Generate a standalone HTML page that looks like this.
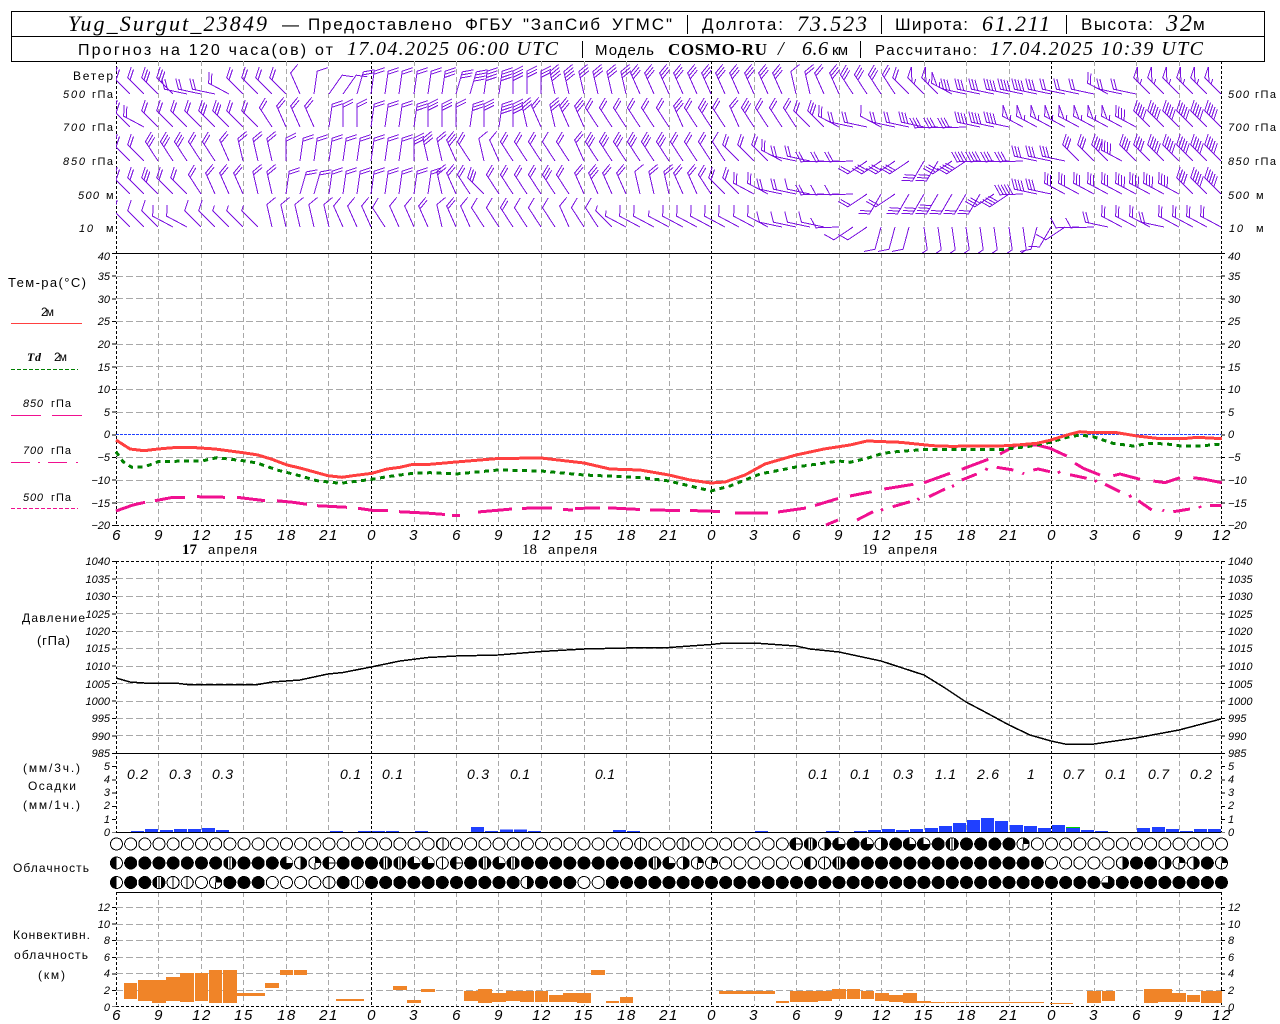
<!DOCTYPE html>
<html><head><meta charset="utf-8"><title>Yug_Surgut_23849</title>
<style>
html,body{margin:0;padding:0;background:#fff}
svg{display:block}
text{font-family:"Liberation Sans",sans-serif;fill:#000}
.i{font-style:italic;font-size:11px}
.u{font-size:11px}
.xl{font-style:italic;font-size:15px;text-anchor:middle}
.h{font-size:17px}
.s{font-family:"Liberation Serif",serif;font-style:italic;font-size:20px}
.l{font-size:13px}
.p{font-style:italic;font-size:14px}
.g{fill:none;stroke:#a8a8a8;stroke-dasharray:7 3}
.v{fill:none;stroke:#a8a8a8;stroke-dasharray:5 3}
.k{fill:none;stroke:#000;stroke-dasharray:3 2}
.cf{fill:none;stroke:#000;stroke-width:13;stroke-linecap:round;stroke-dasharray:0 14.1667}
.ce{fill:none;stroke:#fff;stroke-width:11;stroke-linecap:round;stroke-dasharray:0 14.1667}
.t{fill:none;stroke:#000;stroke-width:4}
</style></head><body>
<svg xmlns="http://www.w3.org/2000/svg" width="1280" height="1024" viewBox="0 0 1280 1024" shape-rendering="crispEdges">
<defs>
<clipPath id="wc"><path d="M116 62H1222V253H116z"/></clipPath>
<path id="f0" d="M0 0V-23l5-2.500"/>
<path id="f1" d="M0 0V-23l10-5"/>
<path id="f2" d="M0 0V-23l10-5M0-19.800l10-5"/>
<path id="f3" d="M0 0V-23l10-5M0-19.800l10-5M0-16.600l10-5"/>
<path id="f4" d="M0 0V-23l10-5M0-19.800l10-5M0-16.600l10-5M0-13.400l10-5"/>
<path id="f5" d="M0 0V-23l10-5M0-19.800l10-5M0-16.600l10-5M0-13.400l10-5M0-10.200l10-5"/>
<path id="fT" d="M0 0V-23L10-28 0-17M0-14l5-2.500"/>
<use id="a1" href="#f1" transform="rotate(-78)"/><use id="a2" href="#f2" transform="rotate(-78)"/><use id="a3" href="#f3" transform="rotate(-78)"/><use id="a4" href="#f4" transform="rotate(-78)"/>
<use id="b0" href="#f0" transform="rotate(-62)"/><use id="b1" href="#f1" transform="rotate(-62)"/><use id="b2" href="#f2" transform="rotate(-62)"/><use id="b3" href="#f3" transform="rotate(-62)"/><use id="b4" href="#f4" transform="rotate(-62)"/><use id="bT" href="#fT" transform="rotate(-62)"/>
<use id="c0" href="#f0" transform="rotate(-45)"/><use id="c1" href="#f1" transform="rotate(-45)"/><use id="c2" href="#f2" transform="rotate(-45)"/><use id="c3" href="#f3" transform="rotate(-45)"/><use id="c4" href="#f4" transform="rotate(-45)"/><use id="c5" href="#f5" transform="rotate(-45)"/><use id="cT" href="#fT" transform="rotate(-45)"/>
<use id="d1" href="#f1" transform="rotate(-33)"/><use id="d2" href="#f2" transform="rotate(-33)"/><use id="d3" href="#f3" transform="rotate(-33)"/>
<use id="e1" href="#f1" transform="rotate(-24)"/><use id="e2" href="#f2" transform="rotate(-24)"/><use id="e3" href="#f3" transform="rotate(-24)"/>
<use id="f-1" href="#f1" transform="rotate(-13)"/><use id="f-2" href="#f2" transform="rotate(-13)"/><use id="f-3" href="#f3" transform="rotate(-13)"/><use id="f-4" href="#f4" transform="rotate(-13)"/>
<use id="g2" href="#f2"/><use id="g3" href="#f3"/><use id="g4" href="#f4"/>
<use id="h1" href="#f1" transform="rotate(8)"/><use id="h2" href="#f2" transform="rotate(8)"/><use id="h3" href="#f3" transform="rotate(8)"/><use id="h4" href="#f4" transform="rotate(8)"/>
<use id="i2" href="#f2" transform="rotate(16)"/><use id="i3" href="#f3" transform="rotate(16)"/><use id="i4" href="#f4" transform="rotate(16)"/>
<use id="j1" href="#f1" transform="rotate(35)"/>
<use id="k1" href="#f1" transform="rotate(-92)"/><use id="k2" href="#f2" transform="rotate(-92)"/><use id="k3" href="#f3" transform="rotate(-92)"/><use id="k4" href="#f4" transform="rotate(-92)"/><use id="k5" href="#f5" transform="rotate(-92)"/>
<use id="m1" href="#f1" transform="rotate(195)"/>
<use id="n1" href="#f1" transform="rotate(210)"/><use id="n2" href="#f2" transform="rotate(210)"/><use id="n3" href="#f3" transform="rotate(210)"/><use id="n4" href="#f4" transform="rotate(210)"/>
<use id="o1" href="#f1" transform="rotate(236)"/><use id="o2" href="#f2" transform="rotate(236)"/><use id="o3" href="#f3" transform="rotate(236)"/><use id="o4" href="#f4" transform="rotate(236)"/>
<use id="r1" href="#f1" transform="rotate(172)"/>
<g id="sv"><circle r="6" fill="#fff" stroke="#000"/><path d="M0-6V6" stroke="#000"/></g>
<g id="sA"><circle r="6" fill="#fff" stroke="#000"/><path d="M0-6.500A6.500 6.500 0 0 0 0 6.500z"/></g>
<g id="sR"><circle r="6" fill="#fff" stroke="#000"/><path d="M0-6.500A6.500 6.500 0 0 1 0 6.500z"/></g>
<g id="sB"><circle r="6.500"/><path d="M-2-7H2V7H-2z" fill="#fff"/><path d="M0-6V6" stroke="#000"/><path d="M-2-6H2M-2 6H2" stroke="#000"/></g>
<g id="sQ"><circle r="6.500"/><path d="M0-6A6 6 0 0 1 6 0H0z" fill="#fff"/></g>
<g id="sW"><circle r="6.500"/><path d="M0-6A6 6 0 0 0-6 0H0z" fill="#fff"/></g>
<g id="sq"><circle r="6" fill="#fff" stroke="#000"/><path d="M0-6.500A6.500 6.500 0 0 1 6.500 0H0z"/><path d="M0 0V6" stroke="#000"/></g>
<g id="sH"><circle r="6" fill="#fff" stroke="#000"/><path d="M0-6.500A6.500 6.500 0 0 0 0 6.500z"/><path d="M0 0H6" stroke="#000"/></g>
</defs>

<!-- header -->
<path d="M11.500 11.500H1264.500V61.500H11.500zM11.500 36.500H1264.500" fill="none" stroke="#000"/>
<text class="s" style="font-size:22px" x="68" y="31" textLength="199">Yug_Surgut_23849</text>
<text class="h" x="282" y="30" textLength="15">—</text>
<text class="h" x="308" y="30" textLength="144">Предоставлено</text>
<text class="h" x="465" y="30" textLength="47">ФГБУ</text>
<text class="h" x="523" y="30" textLength="77">"ЗапСиб</text>
<text class="h" x="612" y="30" textLength="60">УГМС"</text>
<path d="M687.500 15V34M881.500 15V34M1066.500 15V34M582.500 41V58M860.500 41V58" stroke="#000"/>
<text class="h" x="702" y="30" textLength="81">Долгота:</text>
<text class="s" style="font-size:22px" x="797" y="31" textLength="70">73.523</text>
<text class="h" x="895" y="30" textLength="73">Широта:</text>
<text class="s" style="font-size:22px" x="982" y="31" textLength="68">61.211</text>
<text class="h" x="1081" y="30" textLength="72">Высота:</text>
<text class="s" style="font-size:24px" x="1166" y="31" textLength="26">32</text>
<text class="h" x="1193" y="30" textLength="10">м</text>
<text class="h" style="font-size:16px" x="78" y="55" textLength="255">Прогноз на 120 часа(ов) от</text>
<text class="s" x="347" y="55" textLength="211">17.04.2025 06:00 UTC</text>
<text class="h" style="font-size:15px" x="595" y="55" textLength="59">Модель</text>
<text x="668" y="55" textLength="99" style="font-family:'Liberation Serif',serif;font-weight:bold;font-size:17px">COSMO-RU</text>
<text class="s" x="778" y="55" textLength="11">/</text>
<text class="s" x="802" y="55" textLength="26">6.6</text>
<text class="h" style="font-size:15px" x="832" y="55" textLength="16">км</text>
<text class="h" style="font-size:15px" x="875" y="55" textLength="102">Рассчитано:</text>
<text class="s" x="990" y="55" textLength="213">17.04.2025 10:39 UTC</text>

<!-- vertical grid -->
<g id="vg" stroke-width="1">
<path class="v" d="M158.500 61V253M201.500 61V253M243.500 61V253M286.500 61V253M328.500 61V253M414.500 61V253M456.500 61V253M498.500 61V253M541.500 61V253M584.500 61V253M626.500 61V253M669.500 61V253M754.500 61V253M796.500 61V253M839.500 61V253M881.500 61V253M924.500 61V253M966.500 61V253M1009.500 61V253M1094.500 61V253M1136.500 61V253M1179.500 61V253"/>
<path class="v" d="M158.500 253V525M201.500 253V525M243.500 253V525M286.500 253V525M328.500 253V525M414.500 253V525M456.500 253V525M498.500 253V525M541.500 253V525M584.500 253V525M626.500 253V525M669.500 253V525M754.500 253V525M796.500 253V525M839.500 253V525M881.500 253V525M924.500 253V525M966.500 253V525M1009.500 253V525M1094.500 253V525M1136.500 253V525M1179.500 253V525"/>
<path class="v" d="M158.500 561V832M201.500 561V832M243.500 561V832M286.500 561V832M328.500 561V832M414.500 561V832M456.500 561V832M498.500 561V832M541.500 561V832M584.500 561V832M626.500 561V832M669.500 561V832M754.500 561V832M796.500 561V832M839.500 561V832M881.500 561V832M924.500 561V832M966.500 561V832M1009.500 561V832M1094.500 561V832M1136.500 561V832M1179.500 561V832"/>
<path class="v" d="M158.500 892V1006M201.500 892V1006M243.500 892V1006M286.500 892V1006M328.500 892V1006M414.500 892V1006M456.500 892V1006M498.500 892V1006M541.500 892V1006M584.500 892V1006M626.500 892V1006M669.500 892V1006M754.500 892V1006M796.500 892V1006M839.500 892V1006M881.500 892V1006M924.500 892V1006M966.500 892V1006M1009.500 892V1006M1094.500 892V1006M1136.500 892V1006M1179.500 892V1006"/>
<path class="k" d="M116.500 61V525M371.500 61V525M711.500 61V525M1051.500 61V525M1221.500 61V525M116.500 561V832M371.500 561V832M711.500 561V832M1051.500 561V832M1221.500 561V832M116.500 892V1006M371.500 892V1006M711.500 892V1006M1051.500 892V1006M1221.500 892V1006"/>
</g>

<!-- horizontal grid -->
<path class="g" d="M116 276.500H1221M116 298.500H1221M116 321.500H1221M116 344.500H1221M116 366.500H1221M116 389.500H1221M116 412.500H1221M116 457.500H1221M116 480.500H1221M116 502.500H1221"/>
<path class="g" d="M116 578.500H1221M116 596.500H1221M116 613.500H1221M116 631.500H1221M116 648.500H1221M116 666.500H1221M116 683.500H1221M116 701.500H1221M116 718.500H1221M116 735.500H1221"/>
<path class="g" d="M116 907.500H1221M116 924.500H1221M116 940.500H1221M116 957.500H1221M116 973.500H1221M116 990.500H1221"/>
<path d="M116 253.500H1221M116 753.500H1221M116 832.500H1221M116 892.500H1221" fill="none" stroke="#000"/>
<path class="k" d="M116 525.500H1221M116 561.500H1221M116 1006.500H1221"/>
<path d="M116 434.500H1221" fill="none" stroke="#2040ff" stroke-dasharray="3 1"/>
<!-- ticks -->
<path class="t" stroke-dasharray="1 21.667" d="M114 253V526M1223 253V526"/>
<path class="t" stroke-dasharray="1 16.45" d="M114 561V754M1223 561V754"/>
<path class="t" stroke-dasharray="1 12.27" d="M114 766V833M1223 766V833"/>
<path class="t" stroke-dasharray="1 15.6" d="M114 907V1007M1223 907V1007"/>

<!-- wind barbs -->
<g fill="none" stroke="#7a10e0" clip-path="url(#wc)">
<g transform="translate(0 94)"><use href="#c2" x="130"/><use href="#c2" x="144"/><use href="#c3" x="158"/><use href="#c3" x="173"/><use href="#a2" x="187"/><use href="#a2" x="201"/><use href="#a2" x="215"/><use href="#b2" x="229"/><use href="#c2" x="243"/><use href="#c2" x="258"/><use href="#c2" x="272"/><use href="#c2" x="286"/><use href="#e1" x="300"/><use href="#h1" x="314"/><use href="#j1" x="329"/><use href="#j1" x="343"/><use href="#i2" x="357"/><use href="#h2" x="371"/><use href="#h2" x="385"/><use href="#h2" x="399"/><use href="#h2" x="414"/><use href="#h2" x="428"/><use href="#h3" x="442"/><use href="#i3" x="456"/><use href="#i4" x="470"/><use href="#h4" x="484"/><use href="#h4" x="499"/><use href="#g4" x="513"/><use href="#g3" x="527"/><use href="#g3" x="541"/><use href="#f-4" x="555"/><use href="#f-4" x="569"/><use href="#f-3" x="584"/><use href="#f-3" x="598"/><use href="#f-3" x="612"/><use href="#f-3" x="626"/><use href="#e3" x="640"/><use href="#e3" x="654"/><use href="#e3" x="669"/><use href="#e3" x="683"/><use href="#e3" x="697"/><use href="#e3" x="711"/><use href="#e3" x="725"/><use href="#e3" x="739"/><use href="#e3" x="754"/><use href="#e3" x="768"/><use href="#e3" x="782"/><use href="#f-1" x="796"/><use href="#f-2" x="810"/><use href="#e2" x="824"/><use href="#e3" x="839"/><use href="#d3" x="853"/><use href="#d3" x="867"/><use href="#d3" x="881"/><use href="#d2" x="895"/><use href="#c2" x="909"/><use href="#cT" x="924"/><use href="#cT" x="938"/><use href="#bT" x="952"/><use href="#a3" x="966"/><use href="#a3" x="980"/><use href="#a3" x="994"/><use href="#a4" x="1009"/><use href="#a4" x="1023"/><use href="#a4" x="1037"/><use href="#a3" x="1051"/><use href="#a2" x="1065"/><use href="#a2" x="1079"/><use href="#a2" x="1094"/><use href="#b2" x="1108"/><use href="#a2" x="1122"/><use href="#a2" x="1136"/><use href="#cT" x="1150"/><use href="#cT" x="1164"/><use href="#cT" x="1179"/><use href="#cT" x="1193"/><use href="#cT" x="1207"/><use href="#cT" x="1221"/></g>
<g transform="translate(0 127)"><use href="#c2" x="130"/><use href="#b2" x="144"/><use href="#c2" x="158"/><use href="#c2" x="173"/><use href="#c2" x="187"/><use href="#c2" x="201"/><use href="#c3" x="215"/><use href="#c3" x="229"/><use href="#c2" x="243"/><use href="#c2" x="258"/><use href="#d2" x="272"/><use href="#e2" x="286"/><use href="#e2" x="300"/><use href="#e2" x="314"/><use href="#h2" x="329"/><use href="#g2" x="343"/><use href="#g2" x="357"/><use href="#h2" x="371"/><use href="#h2" x="385"/><use href="#h2" x="399"/><use href="#h3" x="414"/><use href="#g3" x="428"/><use href="#g3" x="442"/><use href="#g2" x="456"/><use href="#h3" x="470"/><use href="#g3" x="484"/><use href="#h4" x="499"/><use href="#g4" x="513"/><use href="#f-3" x="527"/><use href="#e2" x="541"/><use href="#f-3" x="555"/><use href="#e3" x="569"/><use href="#e3" x="584"/><use href="#d2" x="598"/><use href="#d2" x="612"/><use href="#d2" x="626"/><use href="#d2" x="640"/><use href="#d2" x="654"/><use href="#d2" x="669"/><use href="#e3" x="683"/><use href="#d2" x="697"/><use href="#d3" x="711"/><use href="#d2" x="725"/><use href="#e2" x="739"/><use href="#d3" x="754"/><use href="#d2" x="768"/><use href="#d2" x="782"/><use href="#d2" x="796"/><use href="#c2" x="810"/><use href="#c3" x="824"/><use href="#b2" x="839"/><use href="#a2" x="853"/><use href="#a2" x="867"/><use href="#b1" x="881"/><use href="#a2" x="895"/><use href="#a2" x="909"/><use href="#a3" x="924"/><use href="#k3" x="938"/><use href="#k3" x="952"/><use href="#k3" x="966"/><use href="#a4" x="980"/><use href="#a4" x="994"/><use href="#a4" x="1009"/><use href="#bT" x="1023"/><use href="#bT" x="1037"/><use href="#bT" x="1051"/><use href="#bT" x="1065"/><use href="#bT" x="1079"/><use href="#bT" x="1094"/><use href="#bT" x="1108"/><use href="#bT" x="1122"/><use href="#b4" x="1136"/><use href="#c5" x="1150"/><use href="#c5" x="1164"/><use href="#c5" x="1179"/><use href="#c5" x="1193"/><use href="#c5" x="1207"/><use href="#c5" x="1221"/></g>
<g transform="translate(0 161)"><use href="#c2" x="130"/><use href="#c2" x="144"/><use href="#d3" x="158"/><use href="#d3" x="173"/><use href="#d3" x="187"/><use href="#d2" x="201"/><use href="#d2" x="215"/><use href="#e2" x="229"/><use href="#f-2" x="243"/><use href="#f-2" x="258"/><use href="#f-2" x="272"/><use href="#g2" x="286"/><use href="#h2" x="300"/><use href="#h2" x="314"/><use href="#h2" x="329"/><use href="#h2" x="343"/><use href="#h2" x="357"/><use href="#h2" x="371"/><use href="#h2" x="385"/><use href="#h2" x="399"/><use href="#g3" x="414"/><use href="#f-3" x="428"/><use href="#f-2" x="442"/><use href="#e3" x="456"/><use href="#d2" x="470"/><use href="#f-1" x="484"/><use href="#e1" x="499"/><use href="#d2" x="513"/><use href="#d2" x="527"/><use href="#d2" x="541"/><use href="#d1" x="555"/><use href="#d2" x="569"/><use href="#e2" x="584"/><use href="#d3" x="598"/><use href="#d3" x="612"/><use href="#d3" x="626"/><use href="#d3" x="640"/><use href="#d3" x="654"/><use href="#d3" x="669"/><use href="#d2" x="683"/><use href="#d2" x="697"/><use href="#d2" x="711"/><use href="#d1" x="725"/><use href="#c2" x="739"/><use href="#c2" x="754"/><use href="#c2" x="768"/><use href="#b2" x="782"/><use href="#a2" x="796"/><use href="#a2" x="810"/><use href="#k2" x="824"/><use href="#k2" x="839"/><use href="#k2" x="853"/><use href="#o2" x="867"/><use href="#o3" x="881"/><use href="#o3" x="895"/><use href="#o3" x="909"/><use href="#n3" x="924"/><use href="#n3" x="938"/><use href="#o3" x="952"/><use href="#o4" x="966"/><use href="#k4" x="980"/><use href="#k4" x="994"/><use href="#k3" x="1009"/><use href="#k3" x="1023"/><use href="#a3" x="1037"/><use href="#a3" x="1051"/><use href="#a3" x="1065"/><use href="#c3" x="1079"/><use href="#c3" x="1094"/><use href="#c4" x="1108"/><use href="#b4" x="1122"/><use href="#c4" x="1136"/><use href="#c4" x="1150"/><use href="#c5" x="1164"/><use href="#c5" x="1179"/><use href="#c5" x="1193"/><use href="#c5" x="1207"/><use href="#c5" x="1221"/></g>
<g transform="translate(0 194)"><use href="#c2" x="130"/><use href="#c2" x="144"/><use href="#c3" x="158"/><use href="#c2" x="173"/><use href="#c2" x="187"/><use href="#d2" x="201"/><use href="#e2" x="215"/><use href="#e2" x="229"/><use href="#e2" x="243"/><use href="#f-2" x="258"/><use href="#f-2" x="272"/><use href="#h2" x="286"/><use href="#i2" x="300"/><use href="#i2" x="314"/><use href="#h2" x="329"/><use href="#h2" x="343"/><use href="#h2" x="357"/><use href="#h2" x="371"/><use href="#h2" x="385"/><use href="#h2" x="399"/><use href="#h2" x="414"/><use href="#h2" x="428"/><use href="#f-2" x="442"/><use href="#e2" x="456"/><use href="#d2" x="470"/><use href="#c3" x="484"/><use href="#d2" x="499"/><use href="#d2" x="513"/><use href="#d2" x="527"/><use href="#d2" x="541"/><use href="#d3" x="555"/><use href="#d2" x="569"/><use href="#e2" x="584"/><use href="#e3" x="598"/><use href="#e2" x="612"/><use href="#e2" x="626"/><use href="#f-1" x="640"/><use href="#f-2" x="654"/><use href="#f-2" x="669"/><use href="#e2" x="683"/><use href="#e2" x="697"/><use href="#d2" x="711"/><use href="#c2" x="725"/><use href="#c2" x="739"/><use href="#b2" x="754"/><use href="#b2" x="768"/><use href="#a2" x="782"/><use href="#a2" x="796"/><use href="#a1" x="810"/><use href="#k2" x="824"/><use href="#k1" x="839"/><use href="#k1" x="853"/><use href="#o2" x="867"/><use href="#n2" x="881"/><use href="#o2" x="895"/><use href="#n3" x="909"/><use href="#n3" x="924"/><use href="#n4" x="938"/><use href="#n2" x="952"/><use href="#n2" x="966"/><use href="#n2" x="980"/><use href="#o3" x="994"/><use href="#o4" x="1009"/><use href="#k5" x="1023"/><use href="#a4" x="1037"/><use href="#a3" x="1051"/><use href="#b3" x="1065"/><use href="#b3" x="1079"/><use href="#b3" x="1094"/><use href="#b3" x="1108"/><use href="#b3" x="1122"/><use href="#b4" x="1136"/><use href="#b4" x="1150"/><use href="#b4" x="1164"/><use href="#b4" x="1179"/><use href="#c4" x="1193"/><use href="#c5" x="1207"/><use href="#c5" x="1221"/></g>
<g transform="translate(0 227)"><use href="#c1" x="130"/><use href="#c1" x="144"/><use href="#c1" x="158"/><use href="#b1" x="173"/><use href="#b1" x="187"/><use href="#c1" x="201"/><use href="#c1" x="215"/><use href="#c0" x="229"/><use href="#c0" x="243"/><use href="#c0" x="258"/><use href="#f-1" x="272"/><use href="#f-1" x="286"/><use href="#f-1" x="300"/><use href="#f-1" x="314"/><use href="#f-1" x="329"/><use href="#e1" x="343"/><use href="#e1" x="357"/><use href="#e1" x="371"/><use href="#d1" x="385"/><use href="#e1" x="399"/><use href="#e1" x="414"/><use href="#e2" x="428"/><use href="#f-1" x="442"/><use href="#e2" x="456"/><use href="#e1" x="470"/><use href="#d1" x="484"/><use href="#d1" x="499"/><use href="#d2" x="513"/><use href="#d1" x="527"/><use href="#d1" x="541"/><use href="#d1" x="555"/><use href="#e1" x="569"/><use href="#d1" x="584"/><use href="#d1" x="598"/><use href="#c0" x="612"/><use href="#b0" x="626"/><use href="#b1" x="640"/><use href="#b1" x="654"/><use href="#b0" x="669"/><use href="#b1" x="683"/><use href="#b1" x="697"/><use href="#b1" x="711"/><use href="#b1" x="725"/><use href="#b1" x="739"/><use href="#b1" x="754"/><use href="#b1" x="768"/><use href="#a1" x="782"/><use href="#a1" x="796"/><use href="#a1" x="810"/><use href="#a1" x="824"/><use href="#k1" x="839"/><use href="#o1" x="853"/><use href="#o1" x="867"/><use href="#m1" x="881"/><use href="#m1" x="895"/><use href="#m1" x="909"/><use href="#r1" x="924"/><use href="#r1" x="938"/><use href="#r1" x="952"/><use href="#r1" x="966"/><use href="#r1" x="980"/><use href="#r1" x="994"/><use href="#r1" x="1009"/><use href="#r1" x="1023"/><use href="#m1" x="1037"/><use href="#n1" x="1051"/><use href="#o1" x="1065"/><use href="#k1" x="1079"/><use href="#k1" x="1094"/><use href="#a2" x="1108"/><use href="#b2" x="1122"/><use href="#b2" x="1136"/><use href="#b2" x="1150"/><use href="#a2" x="1164"/><use href="#b2" x="1179"/><use href="#b2" x="1193"/><use href="#b2" x="1207"/><use href="#b2" x="1221"/></g>
</g>

<!-- temperature curves -->
<g fill="none" stroke-linejoin="round">
<path stroke="#f01090" stroke-width="3" d="M116 511L133 505 145 502.300M155 500.700L173 497.300 185 497.300M197 496.700L225 497.300M237 497.300L265 500.700M277 500.700L293 502.300 307 504.300M317 505.700L347 507.300M358 508.300L372 510.300 388 510.300M399 511.700L430 513.300 445 514.500M452 515.500L460 515.500M478 512L512 509M522 508.300L552 508M563 509.500L573 510M575 508.500L600 507.800M608 507.800L640 509.500M650 510L680 510.500M690 510.500L720 511.500M735 513L768 513M778 512L806 508M815 505.500L838 498.500M850 496L871.700 491.700M884.300 489L913.300 484.300M924 482.700L950 473.300M961.700 469.300L988.300 459.300M1000 454L1016.700 445 1036.700 445 1050 448.300 1066.700 456M1075 463.300L1083.300 468.300 1100 475M1113.300 475.700L1120 474 1140 479.300M1153.300 481L1165 482.700 1180 477.700M1193.300 477.700L1203.300 479 1221.700 482.700"/>
<path stroke="#f01090" stroke-width="3" d="M826 525L838 520M857 520L873 511.700M881 510.500L883 509M892.700 506.700L910 501.700M917.500 500L919 498.500M929 496.700L945 489M952 486.500L954 485.500M961.700 480L976.700 474M986 470.500L987 468M996.700 467.300L1013.300 470M1022.500 473L1024 474M1033.300 470L1038.300 469 1050 471.700M1058.500 471L1059.500 473.500M1070 474.700L1086.700 478.300M1095 480L1096.500 482M1105 484.300L1120 491.700M1129.500 495L1131 497.500M1138.300 500.700L1151.700 510M1162.500 510L1164 511M1173.300 511.700L1190 509M1199.500 506L1200.500 508M1210 505.300L1221.700 505.300"/>
<path stroke="#008000" stroke-width="3" stroke-dasharray="5 4.500" d="M116 451.700L123 461.700 131.700 467.300 145 466.700 158 461.700 187 461 203 460.700 217 457.700 243 460.700 257 463 277 470 297 475 317 480.700 340 483.300 353 481.700 372 479.300 387 476.700 413 473.300 430 472.700 456 474 498 470 541 471 584 475 640 477.500 669 481 711 491 730 486 760 474 796 467 839 461 850 462.300 867 458.300 883 453.300 900 451.300 923 449.700 1000 449.700 1027 446.700 1050 442.300 1067 437.300 1080 435 1093 436.700 1113 443.300 1133 446 1150 443.300 1167 444 1183 446.300 1203 445.700 1222 444"/>
<path stroke="#ff4040" stroke-width="3" d="M116 440L130 449 144 450.700 158 449 173 447.700 193 447.500 215 449 243 452.700 258 455 272 459.300 287 465 300 468 317 472.700 328 475.700 342 477.300 353 475.700 372 473.300 387 469 400 467.300 413 464.300 430 464.300 456 462 498 458.500 541 458 584 463 610 469 640 470 669 475 690 480 711 483 725 482 745 475 765 464 796 455 824 449 850 445 867 441 900 442.300 933 445.700 950 446.300 1000 446 1017 445 1037 443.300 1050 440.300 1067 435 1080 431.700 1093 432.700 1117 432.700 1137 436 1160 438.700 1183 438.700 1197 437.300 1222 438.700"/>
<path stroke="#000" stroke-width="1.500" d="M116 678L130 682 144 683 175 683 187 684.500 258 684.500 272 682 300 680 328 674 343 672.500 371 667 400 661 428 657.500 456 656 498 655 541 651.500 584 649 626 648 669 647.500 711 644.500 725 643 754 643 796 646 810 649 839 652 881 661 924 675 945 688 966 702 985 712 1009 725 1030 735 1051 741 1065 744 1094 744 1136 738 1179 730 1221 719"/>
</g>

<!-- precipitation bars -->
<path fill="#2040ff" d="M131 832v-1h13v1zM145 832v-3h13v3zM160 832v-2h13v2zM174 832v-3h13v3zM188 832v-3h13v3zM202 832v-4h13v4zM216 832v-2h13v2zM330 832v-1h13v1zM358 832v-1h13v1zM372 832v-1h13v1zM386 832v-1h13v1zM415 832v-1h13v1zM471 832v-5h13v5zM485 832v-1h13v1zM500 832v-2.500h13v2.500zM514 832v-2.500h13v2.500zM528 832v-1h13v1zM613 832v-2h13v2zM627 832v-1h13v1zM755 832v-1h13v1zM826 832v-1h13v1zM854 832v-1h13v1zM868 832v-2h13v2zM882 832v-3h13v3zM896 832v-2h13v2zM910 832v-3h13v3zM925 832v-4h13v4zM939 832v-6h13v6zM953 832v-9h13v9zM967 832v-12h13v12zM981 832v-14h13v14zM995 832v-11h13v11zM1010 832v-7h13v7zM1024 832v-6h13v6zM1038 832v-4h13v4zM1052 832v-7h13v7zM1066 832v-4h14v4zM1081 832v-2h13v2zM1095 832v-1h13v1zM1137 832v-4h13v4zM1152 832v-5h13v5zM1166 832v-3h13v3zM1180 832v-1h13v1zM1194 832v-3h13v3zM1208 832v-3h13v3z"/>
<path fill="#00d000" d="M1066 828v-1h14v1z"/>

<!-- clouds -->
<path class="cf" d="M116.500 844H1223M116.500 863H1223M116.500 882.500H1223"/>
<path class="ce" d="M116.500 844H783M1037.300 844H1223M725.700 863H797M1051.500 863H1109M201.500 882.500h1M272.300 882.500H315.500M584 882.500H599"/>
<g>
<use href="#sv" x="442.800" y="844"/><use href="#sv" x="640.700" y="844"/><use href="#sv" x="683" y="844"/><use href="#sH" x="796" y="844"/><use href="#sB" x="810.300" y="844"/><use href="#sR" x="824.500" y="844"/><use href="#sQ" x="838.700" y="844"/><use href="#sQ" x="867" y="844"/><use href="#sR" x="881" y="844"/><use href="#sQ" x="909.300" y="844"/><use href="#sQ" x="923.500" y="844"/><use href="#sB" x="952" y="844"/><use href="#sq" x="1023" y="844"/>
<use href="#sA" x="116.500" y="863"/><use href="#sB" x="229.800" y="863"/><use href="#sQ" x="286.500" y="863"/><use href="#sR" x="300.500" y="863"/><use href="#sq" x="314.800" y="863"/><use href="#sH" x="329" y="863"/><use href="#sB" x="385.700" y="863"/><use href="#sB" x="399.800" y="863"/><use href="#sQ" x="414" y="863"/><use href="#sQ" x="428" y="863"/><use href="#sv" x="442.300" y="863"/><use href="#sH" x="456.500" y="863"/><use href="#sB" x="484.800" y="863"/><use href="#sQ" x="499" y="863"/><use href="#sB" x="513" y="863"/><use href="#sB" x="654.800" y="863"/><use href="#sQ" x="669" y="863"/><use href="#sR" x="683" y="863"/><use href="#sq" x="697.300" y="863"/><use href="#sq" x="711.500" y="863"/><use href="#sA" x="810.300" y="863"/><use href="#sv" x="824.500" y="863"/><use href="#sB" x="838.700" y="863"/><use href="#sR" x="1122.500" y="863"/><use href="#sR" x="1165" y="863"/><use href="#sq" x="1179" y="863"/><use href="#sR" x="1193.300" y="863"/><use href="#sq" x="1221.500" y="863"/>
<use href="#sA" x="116.500" y="882.500"/><use href="#sB" x="158.800" y="882.500"/><use href="#sv" x="173" y="882.500"/><use href="#sv" x="187.200" y="882.500"/><use href="#sq" x="215.500" y="882.500"/><use href="#sv" x="329" y="882.500"/><use href="#sv" x="357.300" y="882.500"/><use href="#sR" x="527" y="882.500"/><use href="#sW" x="1108" y="882.500"/>
</g>

<!-- convective cloud -->
<path fill="#f08428" d="M124 983h13v16h-13zM138 980h14v21h-14zM152 980h14v23h-14zM166 977h14v24h-14zM180 973h14v29h-14zM195 973h13v28h-13zM209 970h13v33h-13zM223 970h14v33h-14zM237 993h28v3h-28zM265 983h14v5h-14zM280 970h13v5h-13zM294 970h13v5h-13zM336 999h28v2h-28zM393 986h14v4h-14zM407 1000h14v3h-14zM421 989h14v3h-14zM464 991h14v10h-14zM478 989h14v14h-14zM492 993h14v9h-14zM506 991h14v10h-14zM520 991h14v11h-14zM535 991h13v11h-13zM549 995h14v7h-14zM563 993h14v9h-14zM577 993h14v10h-14zM591 970h14v5h-14zM606 1001h13v2h-13zM620 997h13v6h-13zM719 991h56v3h-56zM776 1001h13v2h-13zM790 991h14v11h-14zM804 991h14v11h-14zM818 991h14v10h-14zM832 989h14v10h-14zM847 989h13v10h-13zM861 991h13v8h-13zM875 993h14v8h-14zM889 995h14v7h-14zM903 993h14v10h-14zM917 1001h14v2h-14zM931 1002h14v1h-14zM946 1002h13v1h-13zM960 1002h84v1h-84zM1050 1003h23v1h-23zM1087 991h14v12h-14zM1102 991h13v10h-13zM1144 989h14v14h-14zM1158 989h14v13h-14zM1172 993h14v9h-14zM1187 995h13v7h-13zM1201 991h14v12h-14zM1215 991h7v12h-7z"/>

<!-- left labels -->
<text class="l" style="font-size:12px" x="73" y="80" textLength="40">Ветер</text>
<text class="i" x="63" y="98" textLength="22">500</text><text class="u" x="92" y="98" textLength="21">гПа</text>
<text class="i" x="63" y="131" textLength="22">700</text><text class="u" x="92" y="131" textLength="21">гПа</text>
<text class="i" x="63" y="165" textLength="22">850</text><text class="u" x="92" y="165" textLength="21">гПа</text>
<text class="i" x="78" y="199" textLength="21">500</text><text class="u" x="106" y="199">м</text>
<text class="i" x="79" y="232" textLength="14">10</text><text class="u" x="106" y="232">м</text>
<text class="i" x="1228" y="98" textLength="21">500</text><text class="u" x="1255" y="98" textLength="21">гПа</text>
<text class="i" x="1228" y="131" textLength="21">700</text><text class="u" x="1255" y="131" textLength="21">гПа</text>
<text class="i" x="1228" y="165" textLength="21">850</text><text class="u" x="1255" y="165" textLength="21">гПа</text>
<text class="i" x="1228" y="199" textLength="21">500</text><text class="u" x="1256" y="199">м</text>
<text class="i" x="1229" y="232" textLength="14">10</text><text class="u" x="1256" y="232">м</text>

<text class="l" x="8" y="287" textLength="78">Тем-ра(°C)</text>
<text class="u" style="font-size:12px" x="41" y="316" textLength="13">2м</text>
<path d="M11 323.500H82" stroke="#ff4040" fill="none"/>
<text x="27" y="361" style="font-family:'Liberation Serif',serif;font-style:italic;font-weight:bold;font-size:12px" textLength="14">Td</text><text class="u" style="font-size:12px" x="54" y="361" textLength="13">2м</text>
<path d="M11 369.500H78" stroke="#008000" fill="none" stroke-dasharray="4 2"/>
<text class="i" x="23" y="407" textLength="20">850</text><text class="u" x="51" y="407" textLength="20">гПа</text>
<path d="M11 415.500H41M52 415.500H82" stroke="#f01090" fill="none"/>
<text class="i" x="23" y="454" textLength="20">700</text><text class="u" x="51" y="454" textLength="20">гПа</text>
<path d="M11 462.500H30M38 462.500H40M48 462.500H67M76 462.500H78" stroke="#f01090" fill="none"/>
<text class="i" x="23" y="501" textLength="20">500</text><text class="u" x="51" y="501" textLength="20">гПа</text>
<path d="M11 508.500H78" stroke="#f01090" fill="none" stroke-dasharray="4 2"/>

<text x="182" y="554" class="s" style="font-size:15px;font-style:normal;font-weight:bold" textLength="15">17</text><text class="l" x="208" y="554" textLength="49">апреля</text>
<text x="522" y="554" class="s" style="font-size:15px;font-style:normal" textLength="15">18</text><text class="l" x="548" y="554" textLength="49">апреля</text>
<text x="862" y="554" class="s" style="font-size:15px;font-style:normal" textLength="15">19</text><text class="l" x="888" y="554" textLength="49">апреля</text>

<text class="l" style="font-size:12px" x="22" y="622" textLength="63">Давление</text>
<text class="l" x="37" y="645" textLength="33">(гПа)</text>
<text class="l" style="font-size:12px" x="23" y="772" textLength="57">(мм/3ч.)</text>
<text class="l" style="font-size:12px" x="28" y="790" textLength="48">Осадки</text>
<text class="l" style="font-size:12px" x="23" y="809" textLength="57">(мм/1ч.)</text>
<text class="l" style="font-size:12px" x="13" y="872" textLength="76">Облачность</text>
<text class="l" style="font-size:12px" x="13" y="939" textLength="77">Конвективн.</text>
<text class="l" style="font-size:12px" x="14" y="959" textLength="74">облачность</text>
<text class="l" style="font-size:12px" x="38" y="979" textLength="27">(км)</text>

<!-- left axis numbers -->
<g class="i" text-anchor="end" style="font-style:italic;font-size:11px">
<text x="110" y="260">40</text><text x="110" y="280">35</text><text x="110" y="303">30</text><text x="110" y="325">25</text><text x="110" y="348">20</text><text x="110" y="371">15</text><text x="110" y="393">10</text><text x="110" y="416">5</text><text x="110" y="438">0</text><text x="110" y="461">−5</text><text x="110" y="484">−10</text><text x="110" y="507">−15</text><text x="110" y="529">−20</text>
<text x="110" y="565">1040</text><text x="110" y="583">1035</text><text x="110" y="600">1030</text><text x="110" y="618">1025</text><text x="110" y="635">1020</text><text x="110" y="652">1015</text><text x="110" y="670">1010</text><text x="110" y="688">1005</text><text x="110" y="705">1000</text><text x="110" y="722">995</text><text x="110" y="740">990</text><text x="110" y="757">985</text>
<text x="110" y="770">5</text><text x="110" y="783">4</text><text x="110" y="796">3</text><text x="110" y="809">2</text><text x="110" y="823">1</text><text x="110" y="836">0</text>
<text x="110" y="911">12</text><text x="110" y="928">10</text><text x="110" y="944">8</text><text x="110" y="961">6</text><text x="110" y="977">4</text><text x="110" y="994">2</text><text x="110" y="1011">0</text>
</g>
<g style="font-style:italic;font-size:11px">
<text x="1228" y="260">40</text><text x="1228" y="280">35</text><text x="1228" y="303">30</text><text x="1228" y="325">25</text><text x="1228" y="348">20</text><text x="1228" y="371">15</text><text x="1228" y="393">10</text><text x="1228" y="416">5</text><text x="1228" y="438">0</text><text x="1228" y="461">−5</text><text x="1228" y="484">−10</text><text x="1228" y="507">−15</text><text x="1228" y="529">−20</text>
<text x="1228" y="565">1040</text><text x="1228" y="583">1035</text><text x="1228" y="600">1030</text><text x="1228" y="618">1025</text><text x="1228" y="635">1020</text><text x="1228" y="652">1015</text><text x="1228" y="670">1010</text><text x="1228" y="688">1005</text><text x="1228" y="705">1000</text><text x="1228" y="722">995</text><text x="1228" y="740">990</text><text x="1228" y="757">985</text>
<text x="1228" y="770">5</text><text x="1228" y="783">4</text><text x="1228" y="796">3</text><text x="1228" y="809">2</text><text x="1228" y="823">1</text><text x="1228" y="836">0</text>
<text x="1228" y="911">12</text><text x="1228" y="928">10</text><text x="1228" y="944">8</text><text x="1228" y="961">6</text><text x="1228" y="977">4</text><text x="1228" y="994">2</text><text x="1228" y="1011">0</text>
</g>

<!-- x labels -->
<g class="xl" style="font-style:italic;font-size:15px;text-anchor:middle;letter-spacing:1.500px">
<text x="117" y="540">6</text><text x="159" y="540">9</text><text x="202" y="540">12</text><text x="244" y="540">15</text><text x="287" y="540">18</text><text x="329" y="540">21</text><text x="372" y="540">0</text><text x="414" y="540">3</text><text x="457" y="540">6</text><text x="499" y="540">9</text><text x="542" y="540">12</text><text x="584" y="540">15</text><text x="627" y="540">18</text><text x="669" y="540">21</text><text x="712" y="540">0</text><text x="754" y="540">3</text><text x="797" y="540">6</text><text x="839" y="540">9</text><text x="882" y="540">12</text><text x="924" y="540">15</text><text x="967" y="540">18</text><text x="1009" y="540">21</text><text x="1052" y="540">0</text><text x="1094" y="540">3</text><text x="1137" y="540">6</text><text x="1179" y="540">9</text><text x="1222" y="540">12</text>
<text x="117" y="1020">6</text><text x="159" y="1020">9</text><text x="202" y="1020">12</text><text x="244" y="1020">15</text><text x="287" y="1020">18</text><text x="329" y="1020">21</text><text x="372" y="1020">0</text><text x="414" y="1020">3</text><text x="457" y="1020">6</text><text x="499" y="1020">9</text><text x="542" y="1020">12</text><text x="584" y="1020">15</text><text x="627" y="1020">18</text><text x="669" y="1020">21</text><text x="712" y="1020">0</text><text x="754" y="1020">3</text><text x="797" y="1020">6</text><text x="839" y="1020">9</text><text x="882" y="1020">12</text><text x="924" y="1020">15</text><text x="967" y="1020">18</text><text x="1009" y="1020">21</text><text x="1052" y="1020">0</text><text x="1094" y="1020">3</text><text x="1137" y="1020">6</text><text x="1179" y="1020">9</text><text x="1222" y="1020">12</text>
</g>

<!-- precipitation values -->
<g class="p" style="font-style:italic;font-size:14px">
<text x="127" y="779" textLength="21">0.2</text><text x="169" y="779" textLength="22">0.3</text><text x="212" y="779" textLength="21">0.3</text><text x="340" y="779" textLength="21">0.1</text><text x="382" y="779" textLength="21">0.1</text><text x="467" y="779" textLength="22">0.3</text><text x="510" y="779" textLength="20">0.1</text><text x="595" y="779" textLength="20">0.1</text><text x="808" y="779" textLength="20">0.1</text><text x="850" y="779" textLength="20">0.1</text><text x="893" y="779" textLength="20">0.3</text><text x="935" y="779" textLength="21">1.1</text><text x="977" y="779" textLength="22">2.6</text><text x="1027" y="779">1</text><text x="1063" y="779" textLength="21">0.7</text><text x="1105" y="779" textLength="21">0.1</text><text x="1148" y="779" textLength="21">0.7</text><text x="1190" y="779" textLength="22">0.2</text>
</g>
</svg>
</body></html>
